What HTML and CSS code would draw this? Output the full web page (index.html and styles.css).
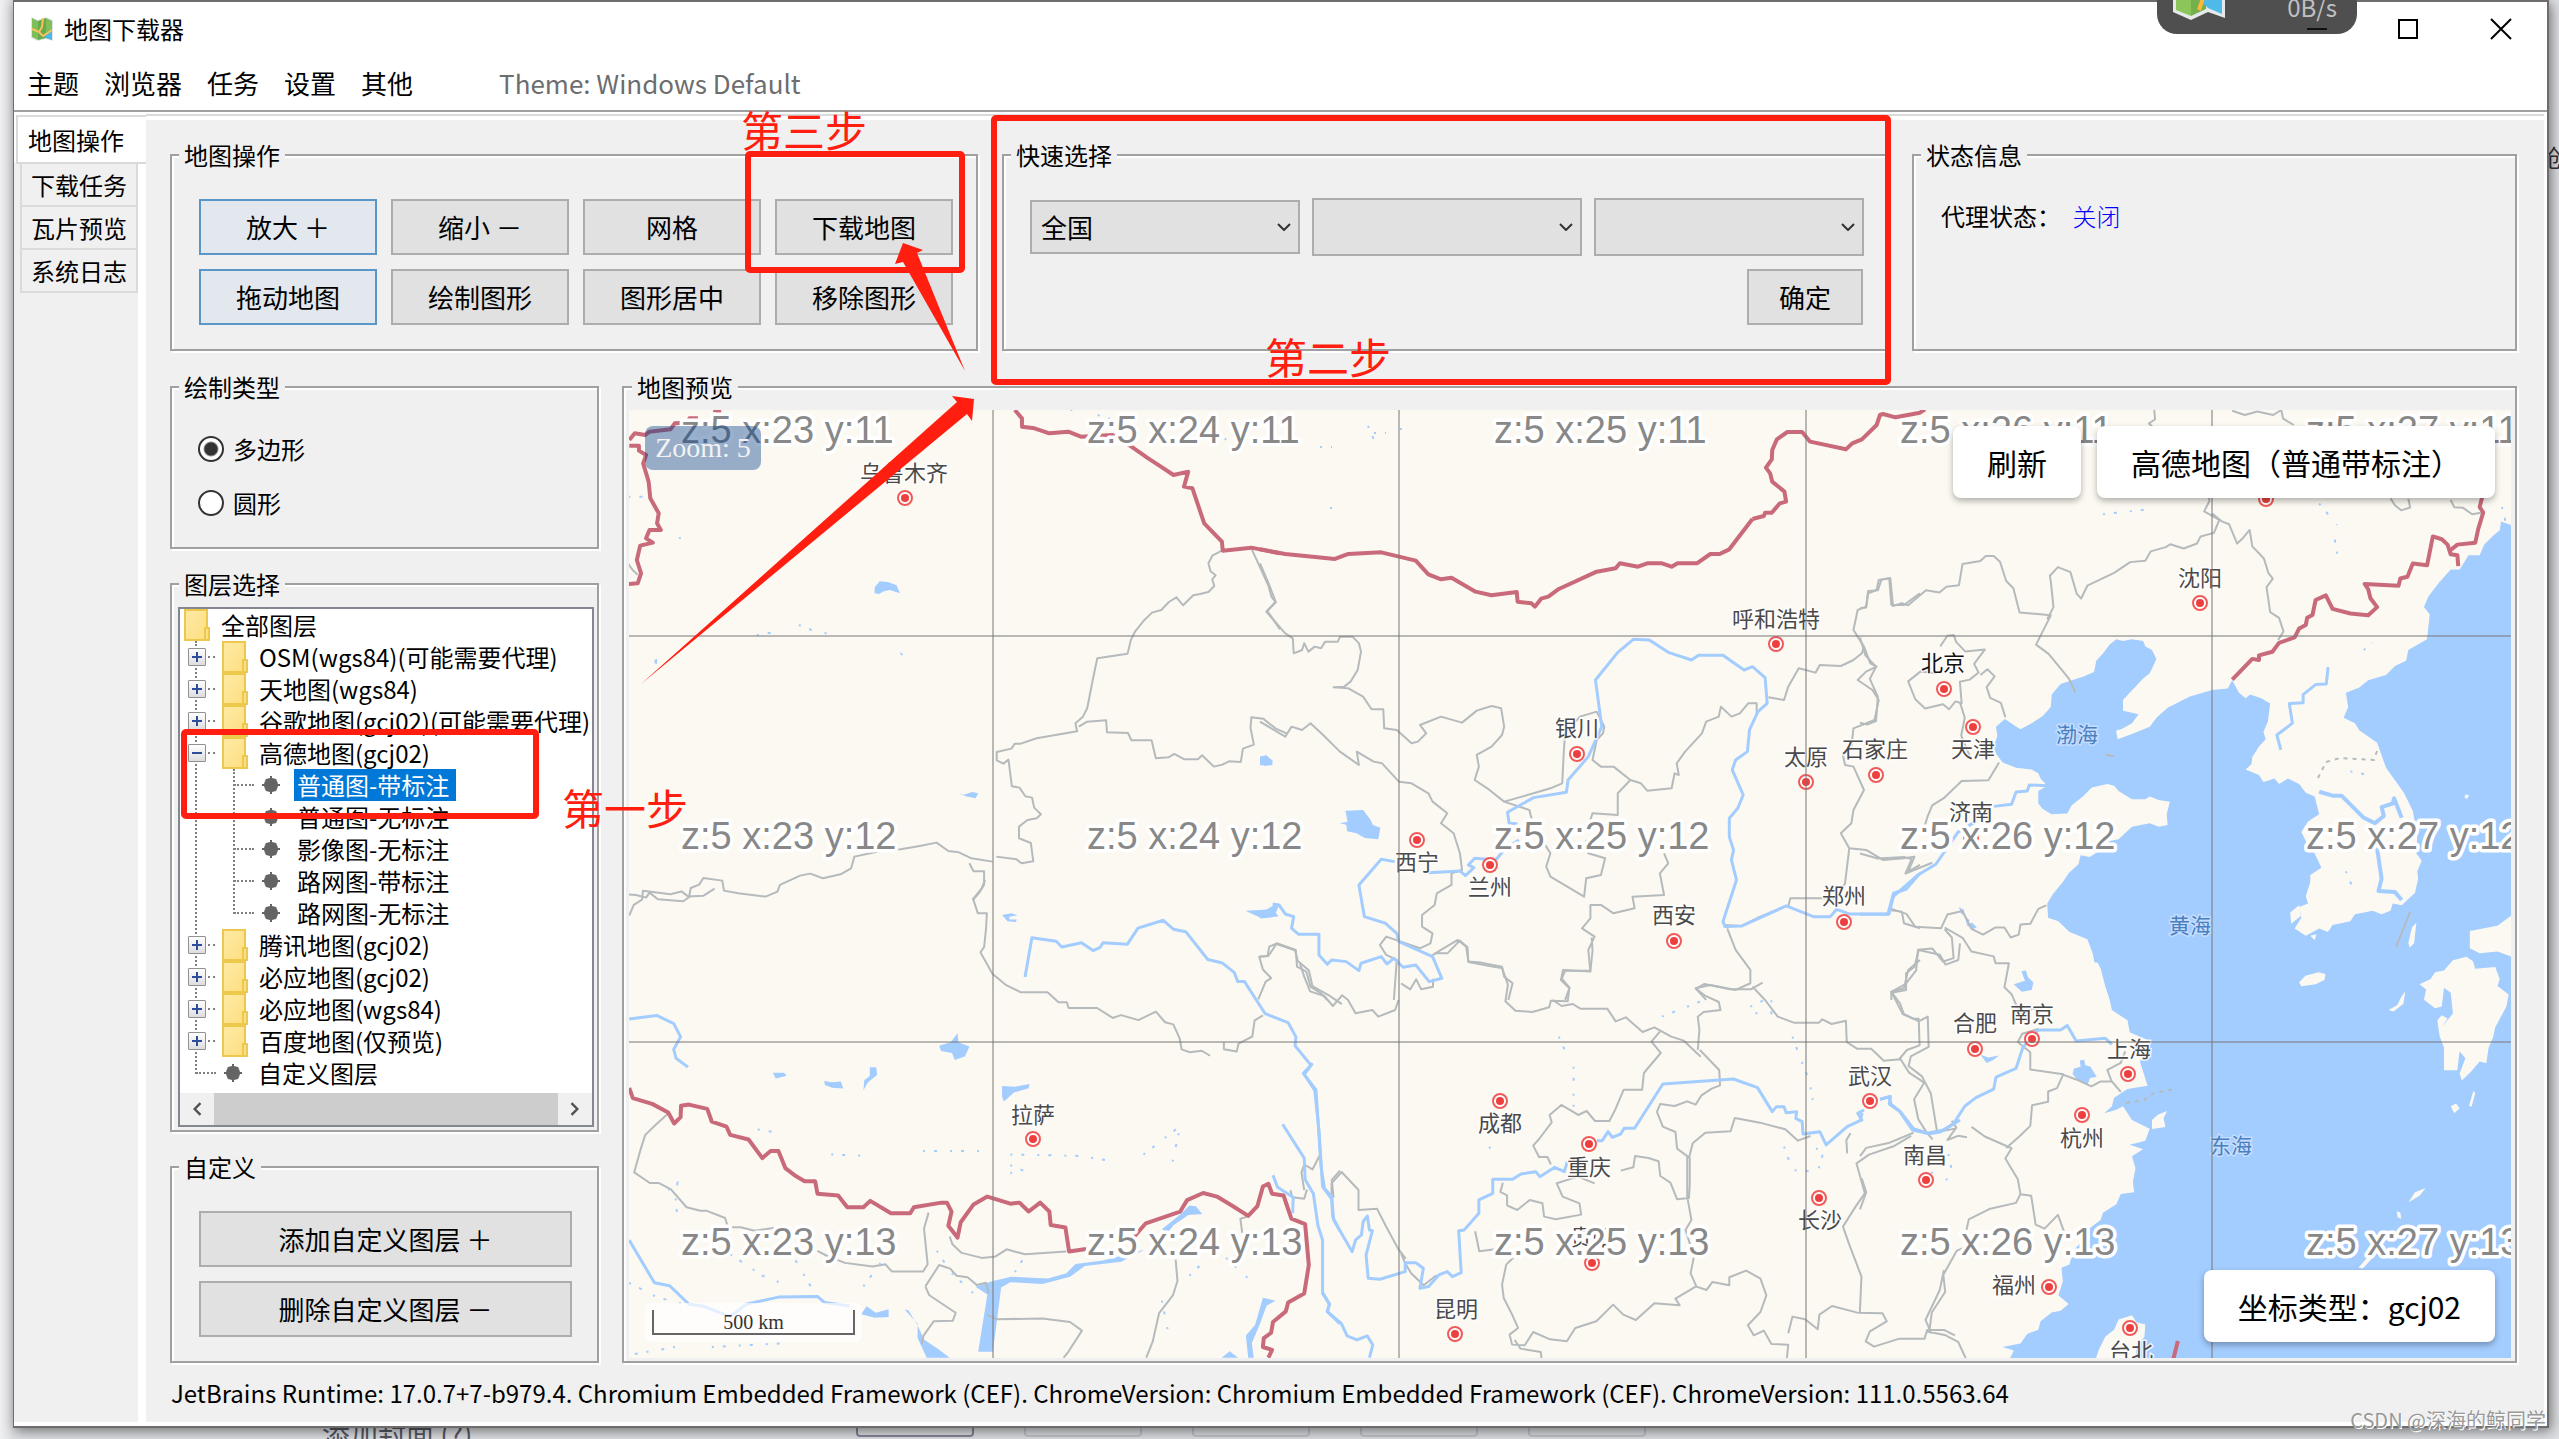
FILE: index.html
```html
<!DOCTYPE html>
<html lang="zh-CN">
<head>
<meta charset="utf-8">
<title>地图下载器</title>
<link rel="stylesheet" href="styles.css">
</head>
<body>
<div class="backdrop" aria-hidden="true">
  <span class="backdrop-side">创</span>
  <span class="backdrop-label">添加封面 (?)</span>
  <div class="backdrop-boxes"><i class="dark"></i><i></i><i></i><i></i><i></i></div>
</div>

<main class="window">
  <header class="titlebar">
    <svg class="app-icon" viewBox="0 0 24 26"><path d="M1 1l7 3 8-3 7 3v21l-7-2-8 2-7-3z" fill="#dfe5e8"/><path d="M2 2l6 3v19l-6-3z" fill="#7fbf5a"/><path d="M8 5l8-3v20l-8 2z" fill="#68ab4d"/><path d="M16 2l6 3v19l-6-2z" fill="#7fbf5a"/><path d="M13 19l9-5v10l-6-2z" fill="#4cb8e8"/><path d="M2 13l7 3 3-5 1-9M9 16l4 4 9-6" fill="none" stroke="#fbc15a" stroke-width="2"/></svg>
    <h1>地图下载器</h1>
    <div class="win-controls">
      <button type="button" aria-label="最大化"><svg viewBox="0 0 20 20"><path d="M1 1h18v18H1z"/></svg></button>
      <button type="button" aria-label="关闭"><svg viewBox="0 0 20 20"><path d="M0 0l20 20M20 0L0 20"/></svg></button>
    </div>
  </header>
  <nav class="menubar">
    <button type="button">主题</button><button type="button">浏览器</button><button type="button">任务</button><button type="button">设置</button><button type="button">其他</button>
    <span class="theme">Theme: Windows Default</span>
  </nav>

  <div class="body">
    <nav class="tabs">
      <button type="button" class="active">地图操作</button>
      <button type="button">下载任务</button>
      <button type="button">瓦片预览</button>
      <button type="button">系统日志</button>
    </nav>

    <section class="content">
      <div class="row-top">
        <fieldset class="group">
          <legend>地图操作</legend>
          <div class="ops">
            <button class="btn on" type="button">放大 ＋</button><button class="btn" type="button">缩小 －</button><button class="btn" type="button">网格</button><button class="btn" type="button">下载地图</button>
            <button class="btn on" type="button">拖动地图</button><button class="btn" type="button">绘制图形</button><button class="btn" type="button">图形居中</button><button class="btn" type="button">移除图形</button>
          </div>
        </fieldset>
        <fieldset class="group">
          <legend>快速选择</legend>
          <div class="quick">
            <select class="combo first" aria-label="省"><option>全国</option></select>
            <select class="combo" aria-label="市"><option></option></select>
            <select class="combo" aria-label="区"><option></option></select>
          </div>
          <button class="btn confirm" type="button">确定</button>
        </fieldset>
        <fieldset class="group">
          <legend>状态信息</legend>
          <p class="status-line">代理状态： <a href="#">关闭</a></p>
        </fieldset>
      </div>

      <div class="row-main">
        <div class="side">
          <fieldset class="group shape">
            <legend>绘制类型</legend>
            <label><input type="radio" name="shape" checked>多边形</label>
            <label><input type="radio" name="shape">圆形</label>
          </fieldset>
          <fieldset class="group layers">
            <legend>图层选择</legend>
            <div class="tree">
              <svg class="defs" width="0" height="0"><defs>
                <linearGradient id="fg" x2="1" y2="1"><stop offset="0" stop-color="#ffeaa6"/><stop offset="1" stop-color="#fcdf80"/></linearGradient>
                <symbol id="folder" viewBox="0 0 26 32"><path d="M1 1h22v30H1z" fill="url(#fg)" stroke="#edc84c" stroke-width="2"/><path d="M21 19h4v12h-4z" fill="#fbe08a" stroke="#edc84c" stroke-width="2"/></symbol>
                <symbol id="leaf" viewBox="0 0 18 18"><path d="M8 0h2v2l4 1 1 2 1 3h2v2h-2l-1 3-1 2-4 1v2H8v-2l-4-1-1-2-1-3H0V8h2l1-3 1-2 4-1z" fill="#646464"/></symbol>
              </defs></svg>
              <div class="node root"><svg class="folder"><use href="#folder"/></svg><span>全部图层</span></div>
              <ul class="level1">
                <li><div class="node"><i class="exp plus"></i><svg class="folder"><use href="#folder"/></svg><span>OSM(wgs84)(可能需要代理)</span></div></li>
                <li><div class="node"><i class="exp plus"></i><svg class="folder"><use href="#folder"/></svg><span>天地图(wgs84)</span></div></li>
                <li><div class="node"><i class="exp plus"></i><svg class="folder"><use href="#folder"/></svg><span>谷歌地图(gcj02)(可能需要代理)</span></div></li>
                <li><div class="node"><i class="exp"></i><svg class="folder"><use href="#folder"/></svg><span>高德地图(gcj02)</span></div>
                  <ul class="level2">
                    <li class="node"><svg class="leaf"><use href="#leaf"/></svg><span class="selected">普通图-带标注</span></li>
                    <li class="node"><svg class="leaf"><use href="#leaf"/></svg><span>普通图-无标注</span></li>
                    <li class="node"><svg class="leaf"><use href="#leaf"/></svg><span>影像图-无标注</span></li>
                    <li class="node"><svg class="leaf"><use href="#leaf"/></svg><span>路网图-带标注</span></li>
                    <li class="node"><svg class="leaf"><use href="#leaf"/></svg><span>路网图-无标注</span></li>
                  </ul></li>
                <li><div class="node"><i class="exp plus"></i><svg class="folder"><use href="#folder"/></svg><span>腾讯地图(gcj02)</span></div></li>
                <li><div class="node"><i class="exp plus"></i><svg class="folder"><use href="#folder"/></svg><span>必应地图(gcj02)</span></div></li>
                <li><div class="node"><i class="exp plus"></i><svg class="folder"><use href="#folder"/></svg><span>必应地图(wgs84)</span></div></li>
                <li><div class="node"><i class="exp plus"></i><svg class="folder"><use href="#folder"/></svg><span>百度地图(仅预览)</span></div></li>
                <li><div class="node end"><svg class="leaf"><use href="#leaf"/></svg><span>自定义图层</span></div></li>
              </ul>
              <div class="scrollbar">
                <svg viewBox="0 0 10 12"><path d="M8 1L3 6l5 5"/></svg><i></i><svg viewBox="0 0 10 12"><path d="M2 1l5 5-5 5"/></svg>
              </div>
            </div>
          </fieldset>
          <fieldset class="group custom">
            <legend>自定义</legend>
            <button class="btn" type="button">添加自定义图层 ＋</button>
            <button class="btn" type="button">删除自定义图层 －</button>
          </fieldset>
        </div>

        <fieldset class="group preview">
          <legend>地图预览</legend>
          <div class="map">
            <svg class="map-canvas" viewBox="629 410 1882 948" preserveAspectRatio="xMidYMid slice">
              <defs><g id="pin"><circle cx="9" cy="9" r="7" fill="#fff" stroke="#f05a5a" stroke-width="2"/><circle cx="9" cy="9" r="4" fill="#ee3f3f"/></g></defs>
              <path fill="#fcf9f2" d="M600 390h1960v1000H600z"/>

              <!-- seas -->
              <g class="sea">
                <path transform="translate(1860 400) scale(.4458 .3571)" d="M422 1450L420 1410 432 1385 455 1350 468 1325 490 1300 495 1275 515 1280 540 1260 560 1235 580 1230 610 1195 650 1185 670 1195 690 1190 688 1160 695 1125 670 1120 650 1110 640 1118 610 1118 580 1095 570 1080 555 1075 520 1085 500 1110 475 1135 465 1158 430 1160 410 1145 400 1130 400 1095 420 1080 405 1060 400 1045 385 1035 350 1030 320 1015 305 990 300 970 308 940 305 915 325 893 345 910 360 922 385 905 410 885 428 860 430 825 450 795 475 785 500 775 525 762 530 730 545 710 560 685 575 670 590 675 610 670 635 675 640 690 655 700 665 725 650 765 635 780 620 800 605 820 590 840 590 870 625 880 610 905 575 930 578 950 610 935 650 915 665 890 690 862 740 830 790 812 825 808 835 785 850 820 865 835 875 825 900 835 920 850 915 900 905 930 910 950 895 970 880 1000 878 1020 865 1035 895 1050 905 1070 930 1060 940 1075 960 1060 985 1075 1000 1100 1020 1110 1030 1160 1005 1180 990 1210 1000 1235 1020 1270 1035 1310 1010 1330 1010 1350 1000 1390 1005 1410 985 1420 990 1450 975 1480 1000 1500 1030 1480 1050 1490 1060 1470 1100 1460 1110 1440 1150 1430 1170 1440 1190 1430 1195 1410 1215 1415 1245 1380 1252 1340 1250 1320 1260 1290 1248 1270 1250 1220 1240 1150 1220 1100 1180 1030 1160 960 1120 925 1110 905 1085 890 1095 860 1090 820 1120 805 1140 785 1180 770 1200 745 1225 730 1230 700 1272 670 1278 600 1265 580 1275 550 1300 510 1325 475 1345 475 1365 435 1390 435 1400 405 1420 380 1435 365 1438 340 1461 350 1500 350 1500 1575 526 1575 522 1550 510 1510 470 1490 445 1460Z"/>
                <path transform="translate(1860 900) scale(.4458 .3438)" d="M526 165L540 200 550 250 560 290 565 320 600 350 605 385 650 410 640 440 628 470 645 540 600 550 570 575 565 600 548 620 575 610 590 600 610 640 650 665 640 700 605 712 635 725 610 745 618 780 612 820 615 850 585 855 575 885 545 910 540 930 510 960 500 990 478 1020 470 1060 452 1070 455 1110 445 1150 468 1175 450 1195 430 1200 405 1225 400 1250 375 1262 360 1290 320 1300 345 1310 330 1350 525 1350 535 1310 550 1270 570 1250 580 1220 610 1208 620 1228 640 1235 638 1270 620 1300 618 1350 1500 1350 1500 165Z"/>
                <!-- lakes -->
                <path transform="translate(1860 900) scale(.4458 .3438)" d="M480 490l15-5-2-18 10-2 2 15 12 5 14 30-15 3-5 18-22-10-12-20zM345 245l25-10-8-28 10-2 5 20 12 15-4 22-22 5zM270 450l18 8 24-6-14 14-14 8zM222 20l12 10-4 14 16 14-6 12 12-4 10 14-8 4-14-10-4-22-10-14z"/>
                <path transform="translate(1260 500) scale(.4209 .3333)" d="M190 970l18-5-5-33 42-2 18 30 5 15 18 8-5 35-32-4-20-14-22-6-2-20zM0 770l15-4 15 18-5 12H0zM0 1240l25-18 15-12 4 6-12 35-32 4z"/>
                <path transform="translate(620 380) scale(.4209 .3333)" d="M605 640v-18l12-18 20 2 20 10 8 24-24-10-14 4-12 8zM805 1240l12 4 20-8 14 4-6 15-24-6zM1520 1130l15-3 15 14v14l-20 2zM82 840l6-4v16l-6-2zM665 815l8 8-5 4z"/>
                <path transform="translate(620 880) scale(.4592 .3565)" d="M695 465l25-10 15-25 2 25 24 12-10 28-22 10-6-20-24-5zM333 541h24l6 8-24 8zM445 563l14 4 22-2 5 20-24-2-16-8zM530 590l2-28 12-12v-25h14l2 22-20 20zM832 578l28 2 32-8-2 12-32 12-22 25-4-14zM832 98l20-5 14 6-18 4v8h16l-2 7-18-2zM1362 86l60-4 12 20-36 6zM1180 980l40-42 20-25 14 2 14 22-30 3-32 28-14 22zM812 1125l40-12 80 5 40-15 20-26 60-10 90-30-50 34-80 12-32 30-60 20-70-5-20 15-18 180h-32l20-160-26-22zM525 1218l12-22 20 18 28-10v22l-30 2zM620 1205l28 40v40l20 55h50l-26-25-30-26-14-40-20-42zM1400 1172l28 8-20 14-14 50-18 55 4 41h-12l-5-62 20-30zM1310 1340l18-18 18 18z"/>
              </g>
              <!-- islands -->
              <g class="land">
                <path transform="translate(1860 900) scale(.4458 .3438)" d="M1500 40L1461 45 1430 75 1368 90 1368 140 1390 155 1430 150 1461 165H1500zM1360 165L1375 178 1380 200 1425 195 1435 230 1430 250 1455 275 1450 310 1425 370 1420 400 1410 430 1405 475 1390 470 1370 500 1350 525 1345 505 1358 460 1345 440 1340 495 1310 495 1310 430 1300 395 1295 350 1305 335 1318 345 1305 370 1330 330 1325 270 1310 255 1305 310 1290 315 1265 290 1270 260 1255 245 1280 230 1290 210 1310 205 1330 175zM985 240l14-20 30-10 15 5-2 18-20 12-32 6zM1230 125l8-45 10-14-5 60-10 12zM1185 320l20-14 10-26 8-14-4 36-22 22zM1230 880l15-30 24-12-14 22zM1325 600l12-8 8 14-12 14zM1366 600l10-45 4 8-8 38zM1204 905l8 4 2 18-8-4zM1118 1070l40-60 12-30-12 50-30 42zM655 640l14-16 20-10-8 20 4 26-30 6z"/>
                <path transform="translate(1860 400) scale(.4458 .3571)" d="M1358 1105l8 2-4 10-6-4zM575 925l14-4-2 14-10 6zM965 1435l20-20 4 30-22 22zM1010 1500l14-4-4 16z"/>
              </g>

              <!-- province boundaries -->
              <g class="prov">
                <path transform="translate(620 380) scale(.4209 .3333)" d="M1430 512l-22 14-10 24 5 24 12 12-8 12 5 20-14 18-20 6-16 4-24 30-16-24-18 14-18 24-22 8-18 22-22 34-10 25-8 42-72 14-10 60-14 90-10 25-18 20 4 24L990 1075l-38 16-14 0-8 15-35 10v25l16 10 12-12 8 80 18 4 14 26 16 4 5 30 16 20-10 12-22 5-20 20v35l28 14 6 55-28 6-12-12-48-8M1090 1040l20-15 45-4 2 36 50 2 8 22 48 0 10 54 30-3 14-10 24 16 32 0 10-12 28 34 20-6 16-10 28 2 5-40 26-12-8-50 2-32 28 4 30 30 26 14M1500 505l40 110 8 36 10 16-20 26 30 55M885 1445l-50-10-30-18-25-4-28-25-40 10-45 10-50 6-60 16-8 35-25 18-42 12-30-14-24 6-48 28-6 20-28 15-65-10-34-8-4-30-45-8-10 20-20 10-4 28-14 12-60-6-20-20-8 15-24-8-30-2-3 28M830 1450l10 24 25 0v40l-12 25-15 22M20 552l10 18 12 14"/>
                <path transform="translate(1260 500) scale(.4209 .3333)" d="M0 190L22 255 37 305 15 335 60 400 78 415 80 460 100 450 105 430 115 455 130 440 145 445 155 425 185 425 190 410 220 410 235 430 240 455 232 510 215 545 200 560 175 562 210 565 245 590 265 628 293 628 295 685 325 690 360 730 375 725 395 700 380 675 430 650 480 668 515 632 550 618 573 625 580 680 575 705 550 740 515 765 520 800 510 840 540 865 580 905 650 880 690 865 718 850 722 750 725 700 760 650 800 635 818 680 815 700 800 720 790 780 810 800 840 800 880 840 850 880 850 945 790 940 785 960M880 840L905 850 920 872 978 865 985 820 995 825 990 790 1010 755 1050 700 1060 665 1090 650 1095 620 1120 650 1140 640 1160 610 1180 610 1180 640M1208 592L1245 600 1255 560 1280 505 1320 518 1330 495 1380 498 1410 480 1430 460 1435 440 1410 390 1420 330 1440 320 1445 280 1465 270 1470 240 1495 235 1500 315 1530 315 1568 280M1435 440L1450 490 1465 500 1440 515 1420 540 1455 570 1470 600 1460 660 1410 685 1405 740 1385 765 1390 795 1410 800 1435 870 1410 930 1405 970 1380 1000 1400 1045 1390 1150 1370 1195 1260 1195 1255 1220M1400 1045L1440 1050 1480 1080 1530 1075 1555 1070 1540 1115 1568 1095M0 665L60 710 75 680 100 690 120 670 150 705 190 755 235 795 230 755 270 785 290 790 330 845 360 850 400 880 410 905 445 940 430 970 460 1000 475 1060 480 1110 455 1120 455 1155 420 1180 415 1215 385 1245 385 1280 410 1300 405 1330 380 1345 300 1310 285 1335 300 1365 325 1380 318 1500M580 905L640 930 650 980 690 1060 680 1100 690 1130 770 1190 775 1135 810 1125 820 1075 780 1060 775 1020M960 1060L970 1090 950 1120 960 1185 885 1190 890 1225 840 1240 810 1215 785 1215 785 1255 765 1285 795 1310 780 1350 785 1415 720 1410 715 1440 735 1465 725 1500M1110 1285L1130 1350 1165 1410 1165 1450 1130 1470 1070 1455 1035 1465 1060 1500M405 1370L430 1350 470 1320 490 1340 495 1385 525 1388 575 1400 580 1430 600 1450 590 1500M0 1370L20 1368 40 1330 85 1350 88 1400 110 1415 120 1460 145 1480 160 1500M1100 1275L1145 1278 1180 1255 1250 1218M1495 1230L1525 1235 1530 1270 1568 1285M1568 1380L1540 1410 1530 1465 1500 1475 1500 1500"/>
                <path transform="translate(1860 400) scale(.4458 .3571)" d="M0 583l14-2 4-46 22-2 8-30 20-4 6 78 20-8 14 6 40-42 30 6 16-16 28-4 8-60 40-8 12-14h18l14 16 14 54 16 20 14 68 70 8-16 40 -5 12-12 30 28 26 20 30 26 40 14 38M420 614l14-34-6-72-2-16 18-24 28 14 14 60 10 14 14-36 60-36 36-30 34-4 12-26 34-12 10-8 30 12 30-14 8-20 30-10 12-36-34-24 12-30-5-30M660 28l2 26-14 12 18 20M835 30l28 12 28-10 36 10 18-14 4 24 24 18M790 318l22 22 16 8 18 54 12-14 16-24 6 46 26 34 10 40 10 16-14 24 8 70 20 16 10 38-12 24M0 665l12 50 24 32-14 34 18 50-4 68-20 10-16-5M180 690l16-30 14-2 6 20 20 26 44-5-24 40 10 24-20 20-22 6 4 60-14-5-14 22-14-14-40 12-22-26-16-50 28-28 36 6M270 770l16-16 16 20-18 30 8 30 24 14 10 40M225 850l10 40-8 50 20 60M312 1015l-24 50-60 2-40 48-26 20-10 30-10 40M0 1270l40 14 60-4 16 6-14 40 60-30M70 1425l34 14 20 36 58 4 14-38 34-10 20 50 26 16 28-20 20 0 14 28 18-8 4-28 22 -2 18-42 18-10M1190 275l10 20 14 14 20-8-4-24M1325 280l8 20 20 2 20 18 20-4"/>
                <path transform="translate(620 880) scale(.4592 .3565)" d="M20 100l10-30 18-15 2-25 60 10 24-8 14 14 34-2 24-20M795 0l-8 25-18 28 10 40h20l-2 45-4 50-8 15 26 60 30 32 32 20 58 0 24 28h18l4 16h62l34 28 18-8 38 14 38-24 20 30 18 6 14 40 4 30 18 8 26-4 18 14M1315 455v20l28 6 4-22 30-20 5-45 18-14M1390 335l16-50 12-10-18-24-8-36 18-2 4-26 14-8 42 18 6 30 24 26 8 45 34 24 30 26M105 655l-26 30-24 30-10 40-14 65 34 30 20 0 26 18 34 50 30 10 14 0 40 20 6 26 28 0 30 10 40-8 30 6M430 1040l20 14 40 20 60 10 28-6 14 20h68l10-20-8-100 10-45M718 1000l6 22 20 24 44 14 30-4 24-20 40 14 90-8M1210 1065l4 60-10 40-30 50-14 80-14 45M800 1220l20 12 100-2 60 10 26 24-30 60-10 16M665 1140l30-60 24 10 14 20 24 4 20 22 20-6 6 30M665 1140l8 24 30 26 28 24-6 22-42 2-22 40-4 24M1355 990l-4-40 14-5M1490 870l-6-50 6-22 18 14 16-40M1460 870l4 20 26 4 6-26M1568 815l-18 26 4 50"/>
                <path transform="translate(1300 940) scale(.4209 .3333)" d="M320 40l30 0 30-38 18 20 2 44 60 14 20 4 14 50-6 50 24 28 40 4 40-14 4-20 40 2 4-42-18-26 8-24 60 0 5-60-2-40M600 180l22 18 26-6 18 14 64 0 20 38 24-12 40 44 28-14 40 28 30 12 40 48 M855 275l-20 30 22 34-40 60-4 50-44 0-20 60-14 34-34 0-20-30-20 12-40-30-28 30 5 22-30 50-14 20 14 34 20 0 8 22M950 330l46 60 2 46-20 10-24 20-14 28-20-10-30 14-34-6-8 24 14 44 30 16 4 50 30 28 0 80-2 40-28 4-16-50-24-20-4-44-24-10-32-6-4 34-30 10M700 730l-40-20-50 20 14 40 40 20 4 34-60 14-28-8-4-40-30-10-30 30-24-14 0-30-16-10 6-28M945 330l4-60-4-40 14-14 40-6-4-24-34-20-20-20 20-14 60 16 50 0 28-20M1075 140l30 40 30 50 38 18 60 0 8-10 22 14 34-10 2 64 24 20 34 0 30 36 40-4 20 40 36 30 -24 50 10 60 20 40 14 20M0 70l10 40 14 44 34 14 20 30 22-32 14 14 18 40 40-10 14 20 40-20 8-30M240 130l22 18 14-30 12 30 28-8 0-24M925 650l8-40 30-32 60-4 10-40 60 14 60 20 30 34 30-14M920 650l0 120 10 70-14 30 20 80-8 50 14 40 24 10 14-24 40 10 0-24 40-20 34 24 14 50-14 50-30 40 14 30 24-14 18 40 40 2-4 50-8 16M940 1040l-48 36 10 20-60-6-44 50-30-16-24-30-40 50-50 20-20 40-40-6-40-22-20 40-30-2-6-30 20-20-14-40-20-50-4-40 10-60 16-20-20-30-60 10-10-60M510 1200l14 26 48 10 2 20M240 940l10 30 14 30 30 36 30-30M75 770l0-40 24-34 40 54 0 60 44-4 20 50 30 70 18 30M1160 1180l10-50 30 8 30 30 4-44 30-26 60 20 60 2 10 24-40 30-10 30 20 16 60-24 60 0 6-26 40 0 26 16M1330 1120l4-110-30-100-14-50 30-60 22-40-20-90 30-26 60-26 40-30M1300 640l-2-40 10-20M1500 1180l-14-40 34-90 10-60M1568 10l-4 50-30 14-14-30-50-14-10 50-20 20 0 50-34 8 26 64 24 14 14 0 2 80-30 14-20 30"/>
                <path transform="translate(1860 900) scale(.4458 .3438)" d="M190 85l16 24 4 60-24 10-24-38-32 4-4 60-24 40-32 22 20 34 8 30 34 22 20-14 2 88-40 28-5 28 30 30 20 50 14 112 40-10M190 80l40 30 20 40 50 14 4 20 30 0-10 70 16 20 20 60 30-20 20 30M400 375l-36 14-10 24 28 30 0 50 74 14-14 40-20 10 0 30-36 10-4 60-24 30-30 34M240 690l-20-4-24 12 20-36-10-20M250 660l30 28 60 34-14 30 28 60 6 44 24 4 10 84 20 12 30-40 14 50M0 745l14-24 50-14 56-30M360 855l-10 26-60 18-46 30-5 30M155 1260l6-60 30-60-4-50 30-70 20-10M150 1255l40 10 30 20 18 50M455 508l30 14 34 20 20-14 26 0 20 30M0 900l14-50-10-40M565 530l-10-36 30-20 10-34"/>
              </g>
              <path class="dmz" d="M2318 778l8-16 14-4 34 2 4-12M2126 1103l18-3 10-7 20-4"/>
              <path class="prov" d="M2396 947l14-35M2106 755l8 1"/>

              <!-- rivers -->
              <g class="river">
                <path transform="translate(1260 500) scale(.4209 .3333)" d="M320 1085L288 1078 235 1155 248 1250 298 1270 325 1300 330 1325 410 1370 432 1435 402 1445 370 1395 340 1402 318 1375 302 1392 288 1370 240 1390 235 1412 205 1385 170 1380 160 1393 140 1365 140 1303 92 1303 75 1285 80 1250 60 1242 45 1215 30 1212M400 1118L475 1113 488 1127 508 1103 495 1095 510 1075 560 1080 580 1050 615 1020M612 972L592 970 588 937 650 893 728 877 732 840 780 770 812 680 797 540 850 457 887 418 925 420 970 457 1025 480 1042 466 1100 466 1150 510 1170 500 1200 533 1205 610 1183 635 1163 690 1158 755 1130 780 1122 810 1148 885 1135 925 1115 955 1115 1010 1125 1050 1120 1080 1132 1140 1100 1265 1105 1280 1145 1278 1250 1218 1315 1250 1355 1250 1370 1228 1400 1242 1492 1242 1505 1180 1535 1168 1568 1120"/>
                <path transform="translate(1860 400) scale(.4458 .3571)" d="M0 1440H65L75 1390 130 1330 170 1300 220 1210 260 1180M300 1138L340 1132 350 1098 375 1095 380 1078 420 1080M1050 748L1046 795 1022 797 994 825 994 848 963 850 970 905 935 938 944 980"/>
                <path class="wide" transform="translate(1860 400) scale(.4458 .3571)" d="M1030 1097L1060 1108 1080 1108 1130 1170 1155 1185 1175 1165 1170 1140 1195 1130 1198 1115 1215 1170M1158 1240L1170 1340 1163 1375 1200 1378 1215 1400"/>
                <path transform="translate(620 880) scale(.4592 .3565)" d="M20 390L80 380 117 403 132 440 117 475 122 500 148 525M882 272L897 162 950 172 962 188 1005 176 1030 198 1045 190 1052 176 1105 180 1128 135 1183 113 1205 138 1232 145 1280 223 1312 233 1338 260 1345 285 1360 285 1405 375 1455 400 1472 440 1470 465 1505 520 1490 545 1513 590 1522 700 1530 860 1550 895 1552 945 1568 985M1443 685L1490 780 1492 840 1510 880 1520 970 1530 1010 1530 1160 1545 1190 1540 1210 1568 1245M1422 828L1432 862 1466 890 1465 935M20 1010L75 1130 108 1138 150 1190 180 1195 240 1225 275 1190 345 1170 430 1168 445 1185 500 1195M1422 100L1432 70"/>
                <path transform="translate(1300 940) scale(.4209 .3333)" d="M30 370L8 400 38 450 50 680 58 745 75 770 80 840 124 935 132 900 146 885 150 845 160 828 165 870 172 872 157 945 162 1015 190 1018 250 995 250 968 275 968 293 985 285 1045 305 1040 330 1005 350 995 362 1010 383 998 377 872 390 870 425 820 425 780 458 760 458 718 505 718 525 702 560 695 570 710 605 682 628 695 635 665M705 602L718 602 732 575 742 592 762 582 770 565 795 565 862 432 1030 417 1087 443 1122 515 1132 500 1150 500 1155 518 1180 515 1178 535 1193 545 1195 582 1235 575 1250 615 1300 560 1335 540 1325 520 1340 510M1378 478L1403 470 1400 492 1425 515 1455 570 1490 580 1530 570 1568 540"/>
                <path transform="translate(1860 900) scale(.4458 .3438)" d="M0 640L5 620M45 580L65 572 70 595 90 615 120 665 155 680 180 675 210 650 235 600 260 575 300 550 305 515 350 490 365 430 380 405 400 378 450 378 465 365 485 410 550 402 565 420"/>
                <path transform="translate(1300 940) scale(.4209 .3333)" d="M165 1253L173 1215 160 1188 135 1200 112 1188 98 1150 65 1115 70 1092 55 1060"/>
              </g>
              <g class="speckle">
                <path transform="translate(620 880) scale(.4592 .3565)" d="M105 870l20-20-5 60 10 50M240 1050l70 60 40 20M370 1040l50 110M530 1140l40-70M300 700l30 6M460 770l80 4M660 760l130 0M850 770l150 4 70 14M1140 770l80-80-20 120M690 1040l30 60 50 60M850 800l30 16-30 6M200 1310l150-10M20 1130l60 40 60 20M1240 1110l40-50M1320 1060l50 60M860 1100l24-50M1180 1180l14 90M120 1310l-90 20"/>
                <path transform="translate(1300 940) scale(.4209 .3333)" d="M1170 290l20 70 20 60 8 60M1150 620l20 70 60 6 16-70-30 0M1500 700l40-60 10 60-30 40M650 380l0 120M860 230l100-50M1070 200l50-30 0 50-40 0M615 290l14 40M450 620l10 30"/>
                <path transform="translate(1860 400) scale(.4458 .3571)" d="M545 320l110-15M1030 290l40 60M1070 430l-5-40M1130 700l20-20M1100 1040l40 10M970 1140l50 30M1440 300l10 50M1090 1320l20 60M985 1100l0 100M1000 1350l-20 60M1050 1490l40-10"/>
                <path transform="translate(620 380) scale(.4209 .3333)" d="M20 350h40M140 475l24-12M425 735l40 20 40 8M325 765l40-8M1135 105l30 12M1070 90h16M1440 180l-3-5"/>
                <path d="M1368 426l6 14M1374 433h12M1320 447h12M1400 429h8M1330 508h8"/>
              </g>

              <!-- national border -->
              <g class="nation">
                <path transform="translate(620 380) scale(.4209 .3333)" d="M938 90L955 115 955 140 985 145 1020 160 1065 155 1095 170 1170 165 1215 200 1255 235 1285 260 1315 285 1350 275 1340 320 1360 325 1388 430 1430 485 1432 512 1500 503 1568 520M240 97L222 90M185 115L165 115 160 128 130 130 120 148 70 155 60 165 35 160 22 180M22 197L45 197 45 212 62 225 55 250 68 305 72 355 92 400 88 430 97 450 70 450 62 475 78 488 48 497 40 540 50 580 42 610 20 612"/>
                <path transform="translate(1260 500) scale(.4209 .3333)" d="M0 148L60 162 178 177 210 162 288 157 370 182 400 223 430 238 455 233 512 275 550 286 610 276 612 305 645 310 653 320 668 296 685 290 710 267 800 215 845 205 855 190 898 200 920 190 955 190 978 200 992 190 1038 190 1070 162 1092 162 1115 148 1170 57"/>
                <path transform="translate(1260 400) scale(.4209 .3333)" d="M1170 357L1197 348 1200 338 1216 338 1235 310 1250 305 1246 275 1217 245 1212 220 1202 203 1216 178 1217 150 1228 118 1253 96 1288 96 1307 125 1392 148 1407 130 1430 118 1465 75 1473 45 1480 42 1510 52 1568 38 1580 28"/>
                <path transform="translate(1860 400) scale(.4458 .3571)" d="M835 783L880 725 895 728 895 715 925 705 940 680 975 665 985 640 1000 630 1003 610 1015 602 1022 560 1045 547 1060 585 1100 598 1140 603 1160 580 1145 555 1140 530 1132 515 1208 520 1212 500 1228 495 1240 458 1272 463 1285 382 1305 390 1318 405 1325 432 1340 435 1342 465M1325 420L1340 405 1380 400 1387 360 1398 315 1390 300 1396 270"/>
                <path transform="translate(620 880) scale(.4592 .3565)" d="M20 583L28 612 70 628 105 652 118 683 132 665 133 633 150 630 190 642 200 678 232 692 240 715 280 728 310 780 328 760 345 760 360 808 380 828 402 845 425 845 430 880 475 885 495 918 530 918 545 900 590 935 632 935 640 918 700 905 712 905 722 930 715 970 735 1003 742 960 770 910 800 888 850 908 870 905 890 930 915 905 935 930 938 968 970 975 978 1042 1015 1035M1120 1000L1145 963 1220 930 1235 898 1270 878 1300 888 1335 915 1368 942 1388 915 1400 860 1412 852 1420 880 1445 885 1462 950 1492 965 1500 1080 1490 1160 1455 1185 1450 1210 1422 1240 1418 1270 1402 1285 1400 1310 1420 1318 1412 1340"/>
                <path transform="translate(1860 900) scale(.4458 .3438)" d="M713 1283L703 1335"/>
              </g>

              <!-- cities -->
              <g class="pins">
                <use href="#pin" x="896" y="489"/><use href="#pin" x="1767" y="635"/><use href="#pin" x="1568" y="745"/><use href="#pin" x="1408" y="831"/><use href="#pin" x="1481" y="856"/><use href="#pin" x="1665" y="932"/><use href="#pin" x="1797" y="773"/><use href="#pin" x="1867" y="766"/><use href="#pin" x="1835" y="913"/><use href="#pin" x="1935" y="680"/><use href="#pin" x="1964" y="718"/><use href="#pin" x="1962" y="829"/><use href="#pin" x="2191" y="594"/><use href="#pin" x="2257" y="490"/><use href="#pin" x="1966" y="1040"/><use href="#pin" x="2023" y="1030"/><use href="#pin" x="2119" y="1065"/><use href="#pin" x="2073" y="1106"/><use href="#pin" x="1917" y="1171"/><use href="#pin" x="2040" y="1278"/><use href="#pin" x="2121" y="1319"/><use href="#pin" x="1861" y="1092"/><use href="#pin" x="1810" y="1189"/><use href="#pin" x="1491" y="1092"/><use href="#pin" x="1580" y="1135"/><use href="#pin" x="1583" y="1254"/><use href="#pin" x="1446" y="1325"/><use href="#pin" x="1024" y="1130"/>
              </g>
              <g class="city">
                <text x="860" y="481">乌鲁木齐</text><text x="1732" y="627">呼和浩特</text><text x="1555" y="736">银川</text><text x="1395" y="870">西宁</text><text x="1468" y="895">兰州</text><text x="1652" y="923">西安</text><text x="1784" y="765">太原</text><text x="1842" y="757">石家庄</text><text x="1822" y="904">郑州</text><text class="capital" x="1921" y="671">北京</text><text x="1951" y="757">天津</text><text x="1949" y="820">济南</text><text x="2178" y="586">沈阳</text><text x="1953" y="1031">合肥</text><text x="2010" y="1022">南京</text><text x="2107" y="1057">上海</text><text x="2060" y="1146">杭州</text><text x="1903" y="1163">南昌</text><text x="1992" y="1293">福州</text><text x="2109" y="1359">台北</text><text x="1848" y="1084">武汉</text><text x="1798" y="1228">长沙</text><text x="1478" y="1131">成都</text><text x="1567" y="1175">重庆</text><text x="1570" y="1245">贵阳</text><text x="1434" y="1317">昆明</text><text x="1011" y="1123">拉萨</text>
                <text class="ocean" x="2056" y="742">渤海</text><text class="ocean" x="2169" y="933">黄海</text><text class="ocean" x="2210" y="1153">东海</text>
              </g>

              <!-- tile grid -->
              <path class="grid" d="M993 400v1000M1399 400v1000M1806 400v1000M2212 400v1000M600 636h1960M600 1042h1960"/>
              <g class="tile">
                <text x="681" y="443">z:5 x:23 y:11</text><text x="1087" y="443">z:5 x:24 y:11</text><text x="1494" y="443">z:5 x:25 y:11</text><text x="1900" y="443">z:5 x:26 y:11</text><text x="2306" y="443">z:5 x:27 y:11</text>
                <text x="681" y="849">z:5 x:23 y:12</text><text x="1087" y="849">z:5 x:24 y:12</text><text x="1494" y="849">z:5 x:25 y:12</text><text x="1900" y="849">z:5 x:26 y:12</text><text x="2306" y="849">z:5 x:27 y:12</text>
                <text x="681" y="1255">z:5 x:23 y:13</text><text x="1087" y="1255">z:5 x:24 y:13</text><text x="1494" y="1255">z:5 x:25 y:13</text><text x="1900" y="1255">z:5 x:26 y:13</text><text x="2306" y="1255">z:5 x:27 y:13</text>
              </g>
            </svg>
            <div class="zoom-badge">Zoom: 5</div>
            <div class="map-buttons"><button type="button">刷新</button><button type="button">高德地图（普通带标注）</button></div>
            <div class="scale"><span>500 km</span></div>
            <div class="coord">坐标类型：gcj02</div>
          </div>
        </fieldset>
      </div>
      <footer class="statusbar">JetBrains Runtime: 17.0.7+7-b979.4. Chromium Embedded Framework (CEF). ChromeVersion: Chromium Embedded Framework (CEF). ChromeVersion: 111.0.5563.64</footer>
    </section>
  </div>
</main>

<div class="net-widget">
  <svg viewBox="0 0 52 52"><path d="M0 0h52v50l-17-6-17 8-18-8z" fill="#e4eaec"/><path d="M3 0h15v48L3 42z" fill="#8cc65a"/><path d="M18 0h15v41l-15 7z" fill="#76b04c"/><path d="M33 20l16-8v34l-14-6-8-7z" fill="#4fb9ea"/><path d="M20 10l10 20 20-16M30 30l-4 12" stroke="#fcb83c" stroke-width="4" fill="none"/></svg>
  <span>0B/s</span><i></i>
</div>

<div class="note box step1"></div><div class="note box step2"></div><div class="note box step3"></div>
<span class="note label l1">第一步</span><span class="note label l2">第二步</span><span class="note label l3">第三步</span>
<svg class="note arrow a1" viewBox="0 0 336 290"><path d="M0 288L316 6 311 0 333 3 331 25 326 18z"/></svg>
<svg class="note arrow a2" viewBox="0 0 72 130"><path d="M70 128L8 19 0 21 8 0 28 7 22 10z"/></svg>
<div class="watermark">CSDN @深海的鲸同学</div>
</body>
</html>
```
FILE: styles.css
```css
* { box-sizing: border-box; }
html, body { height: 100%; }
body {
  margin: 0;
  position: relative;
  overflow: hidden;
  background: #e6e6e8;
  color: #000;
  font: 24px/32px "Noto Sans CJK SC", "Noto Sans", sans-serif;
}
button, select, input { font: inherit; color: inherit; }
button { margin: 0; padding: 0; border: 0; background: none; }
i { font-style: normal; }

/* page behind the window */
.backdrop { position: absolute; inset: 0; background: linear-gradient(90deg, #f0f0f2, #dfe0e3 13px); }
.backdrop-side { position: absolute; left: 2546px; top: 141px; color: #333; white-space: nowrap; }
.backdrop-label { position: absolute; left: 322px; bottom: -12px; font-size: 28px; line-height: 36px; color: #555866; }
.backdrop-boxes { position: absolute; left: 856px; right: 800px; bottom: 2px; display: flex; gap: 50px; }
.backdrop-boxes i { width: 118px; height: 24px; border: 2px solid #c4c5cc; border-radius: 4px; }
.backdrop-boxes .dark { border-color: #85869a; }

.window {
  position: relative;
  display: flex;
  flex-direction: column;
  height: calc(100vh - 11px);
  margin: 0 10px 0 13px;
  border: 2px solid #6e6c6d;
  border-left-width: 1px;
  background: #fff;
  box-shadow: 2px 3px 12px rgba(0, 0, 0, .5);
}
.titlebar { display: flex; align-items: center; height: 54px; padding: 0 36px 0 16px; }
.app-icon { width: 24px; height: 26px; margin-right: 10px; }
.titlebar h1 { margin: 0; font-size: 24px; font-weight: 400; }
.win-controls { display: flex; gap: 73px; margin-left: auto; }
.win-controls button { display: flex; }
.win-controls svg { width: 20px; height: 20px; overflow: visible; fill: none; stroke: #000; stroke-width: 2; }

.menubar { display: flex; align-items: center; gap: 25px; height: 54px; padding: 0 13px; font-size: 26px; }
.theme { margin-left: 61px; color: #6d6d6d; font-size: 26px; }

.body { flex: 1; min-height: 0; display: flex; border-top: 2px solid #a0a0a0; padding-bottom: 4px; }
.tabs { display: flex; flex-direction: column; width: 132px; padding: 3px 8px 0 0; background: linear-gradient(#f0f0f0, #f0f0f0) 0 50px / 124px 100% no-repeat; }
.tabs button { height: 43px; margin-left: 6px; border: 2px solid #dadada; border-top: 0; text-align: center; }
.tabs .active { height: 49px; margin: 0 -8px 0 2px; padding-right: 12px; background: #fff; border-top: 2px solid #dadada; border-right: 0; }
.content { flex: 1; min-width: 0; display: flex; flex-direction: column; margin: 2px 3px 0 0; padding: 26px 27px 0 24px; border-top: 2px solid #dadada; background: #f0f0f0; box-shadow: inset 0 4px 0 #fff; }

.row-top { display: grid; grid-template-columns: 808fr 886fr 605fr; gap: 24px; height: 209px; }
.row-main { flex: 1; min-height: 0; display: flex; gap: 23px; margin-top: 23px; }
.side { display: flex; flex-direction: column; gap: 22px; width: 429px; }

.group {
  min-width: 0;
  margin: 0;
  padding: 0 25px 0 27px;
  border: 2px solid #a0a0a0;
  box-shadow: 2px 2px 0 #fff, inset 2px 2px 0 #fff;
}
.group legend { height: 26px; margin-left: -20px; padding: 0 5px; line-height: 26px; background: #f0f0f0; }

.btn { height: 56px; border: 2px solid #adadad; background: #e1e1e1; font-size: 26px; line-height: 30px; }
.btn.on { border-color: #5a96c8; background: #e2e8ee; }
.ops { display: grid; grid-template-columns: repeat(4, 1fr); gap: 14px; padding-top: 31px; margin-right: -2px; }
.quick { display: grid; grid-template-columns: repeat(3, 1fr); align-items: center; gap: 12px; padding-top: 30px; margin: 0 -3px 0 -1px; }
.combo {
  appearance: none;
  height: 58px;
  padding: 0 9px;
  border: 2px solid #adadad;
  border-radius: 0;
  background: #e1e1e1 url("data:image/svg+xml,%3Csvg xmlns='http://www.w3.org/2000/svg' width='14' height='8'%3E%3Cpath d='M1 1l6 6 6-6' fill='none' stroke='%23333' stroke-width='2'/%3E%3C/svg%3E") right 7px center no-repeat;
  font-size: 26px;
}
.combo.first { height: 54px; }
.confirm { display: block; width: 116px; margin: 13px -2px 0 auto; }
.status-line { margin: 32px 0 0; }
.status-line a { color: #00f; font-weight: 300; text-decoration: none; margin-left: 6px; }

.shape { height: 175px; }
.shape label { display: flex; align-items: center; gap: 9px; height: 54px; margin-left: -1px; }
.shape legend + label { margin-top: 22px; }
.shape input { appearance: none; width: 26px; height: 26px; margin: 0; border: 2px solid #333; border-radius: 50%; background: #fff; }
.shape input:checked { background: radial-gradient(circle, #333 6px, #fff 8px); }

.layers { flex: 1; min-height: 0; display: flex; flex-direction: column; padding: 10px 3px 3px 6px; }
.layers legend { margin-left: 1px; }
.tree { position: relative; display: flex; flex-direction: column; height: 100%; border: 2px solid #828790; background: #fff; overflow: hidden; }
.defs { position: absolute; }
.tree ul { position: relative; margin: 0; padding: 0; list-style: none; }
.node { display: flex; align-items: center; height: 32px; white-space: nowrap; }
.node span { flex: none; padding: 0 7px 0 3px; margin-left: 8px; }
.folder { width: 26px; height: 32px; flex: none; }
.leaf { width: 18px; height: 18px; flex: none; }
.root { padding-left: 4px; }
.level1 { flex: 1; }
.level1 > li > .node { padding-left: 8px; }
.level1::before { content: ""; position: absolute; left: 15px; top: 0; height: 433px; border-left: 2px dotted #808080; }
.exp { position: relative; flex: none; width: 18px; height: 18px; margin-right: 16px; border: 1px solid #919191; border-radius: 1px; background: linear-gradient(#2d4d9a, #2d4d9a) center / 10px 2px no-repeat, linear-gradient(#fff, #ddd); }
.exp.plus { background: linear-gradient(#2d4d9a, #2d4d9a) center / 10px 2px no-repeat, linear-gradient(#2d4d9a, #2d4d9a) center / 2px 10px no-repeat, linear-gradient(#fff, #ddd); }
.exp::after { content: ""; position: absolute; left: 19px; top: 7px; width: 7px; border-top: 2px dotted #808080; }
.level2::before { content: ""; position: absolute; left: 53px; top: 0; height: 145px; border-left: 2px dotted #808080; }
.level2 .node::before { content: ""; width: 20px; margin: 0 8px 0 54px; border-top: 2px dotted #808080; }
.level2 .node span { margin-left: 14px; }
.level1 .end::before { content: ""; width: 20px; margin: 0 8px 0 8px; border-top: 2px dotted #808080; }
.end span { margin-left: 13px; }
.node .selected { background: #0078d7; color: #fff; }
.scrollbar { display: flex; align-items: center; height: 32px; flex: none; background: #f0f0f0; }
.scrollbar i { flex: 1; height: 32px; background: #cdcdcd; }
.scrollbar svg { width: 12px; height: 14px; margin: 0 11px; fill: none; stroke: #505050; stroke-width: 2; }

.custom { height: 209px; }
.custom .btn { display: block; width: 100%; margin-bottom: 14px; }
.custom legend + .btn { margin-top: 31px; }

.preview { flex: 1; display: flex; padding: 10px 4px 3px 5px; }
.preview legend { margin-left: 3px; }
.map { position: relative; flex: 1; overflow: hidden; }
.map-canvas { position: absolute; inset: 0; width: 100%; height: 100%; }
.map-canvas path { vector-effect: non-scaling-stroke; }
.sea { fill: #a3ccff; }
.land { fill: #fcf9f2; }
.prov { fill: none; stroke: #b5babc; stroke-width: 2; stroke-linejoin: round; }
.dmz { fill: none; stroke: #b5babc; stroke-width: 2; stroke-dasharray: 4 5; }
.river { fill: none; stroke: #a3ccff; stroke-width: 3; stroke-linejoin: round; }
.river .wide { stroke-width: 4; }
.speckle { fill: none; stroke: #a3ccff; stroke-width: 2; stroke-dasharray: 2 9 3 13; }
.nation { fill: none; stroke: #c96a7a; stroke-width: 4; stroke-linejoin: round; }
.grid { fill: none; stroke: #777; stroke-width: 1; }
.city text { font-size: 22px; fill: #4a4a4a; stroke: #fff; stroke-width: 3; stroke-opacity: .8; paint-order: stroke; }
.city .capital { fill: #111; }
.city .ocean { font-size: 21px; fill: #4a7fc0; stroke: #cfe3ff; }
.tile text { font: 38px "Liberation Sans", Arial, sans-serif; fill: #888; stroke: #fff; stroke-width: 7; paint-order: stroke; stroke-linejoin: round; }

.zoom-badge { position: absolute; left: 16px; top: 16px; width: 116px; height: 44px; border-radius: 8px; background: rgba(0, 60, 136, .4); color: #f2f2f2; font: 28px/44px "Liberation Serif", serif; text-align: center; }
.map-buttons { position: absolute; right: 16px; top: 16px; display: flex; gap: 16px; }
.map-buttons button, .coord { height: 72px; padding: 0 34px; border-radius: 8px; background: #fff; box-shadow: 0 3px 6px rgba(0, 0, 0, .3); font-size: 30px; line-height: 72px; white-space: nowrap; }
.coord { position: absolute; right: 16px; bottom: 16px; }
.scale { position: absolute; left: 16px; bottom: 16px; padding: 7px; border-radius: 6px; background: rgba(255, 255, 255, .7); }
.scale span { display: block; width: 203px; height: 25px; border: 2px solid #666; border-top: 0; color: #333; font: 20px/24px "Liberation Serif", serif; text-align: center; }

.statusbar { height: 59px; padding-left: 1px; line-height: 60px; white-space: nowrap; font-size: 24px; }

/* network speed widget */
.net-widget { position: absolute; right: 202px; top: 0; width: 200px; height: 34px; border-radius: 0 0 20px 20px; background: #4f4f4f; color: #c0c0c0; overflow: hidden; }
.net-widget svg { position: absolute; left: 16px; top: -32px; width: 52px; height: 52px; }
.net-widget span { position: absolute; right: 20px; top: -9px; font-size: 24px; }
.net-widget i { position: absolute; left: 150px; top: 28px; width: 20px; height: 2px; background: #111; }

/* step annotations */
.note { position: absolute; color: #ff1e10; }
.box { border: 6px solid #ff1e10; border-radius: 5px; }
.step1 { left: 181px; top: 729px; width: 358px; height: 90px; }
.step2 { left: 991px; top: 115px; width: 900px; height: 270px; }
.step3 { left: 745px; top: 151px; width: 220px; height: 122px; }
.label { font-size: 42px; line-height: 48px; white-space: nowrap; }
.l1 { left: 562px; top: 783px; }
.l2 { left: 1265px; top: 332px; }
.l3 { left: 741px; top: 105px; }
.arrow { fill: #ff1e10; }
.a1 { left: 641px; top: 396px; width: 336px; height: 290px; }
.a2 { left: 895px; top: 243px; width: 72px; height: 130px; }

.watermark { position: absolute; right: 13px; bottom: 3px; color: #999; font-size: 20px; text-shadow: 1px 1px 0 #fff; white-space: nowrap; }
```
